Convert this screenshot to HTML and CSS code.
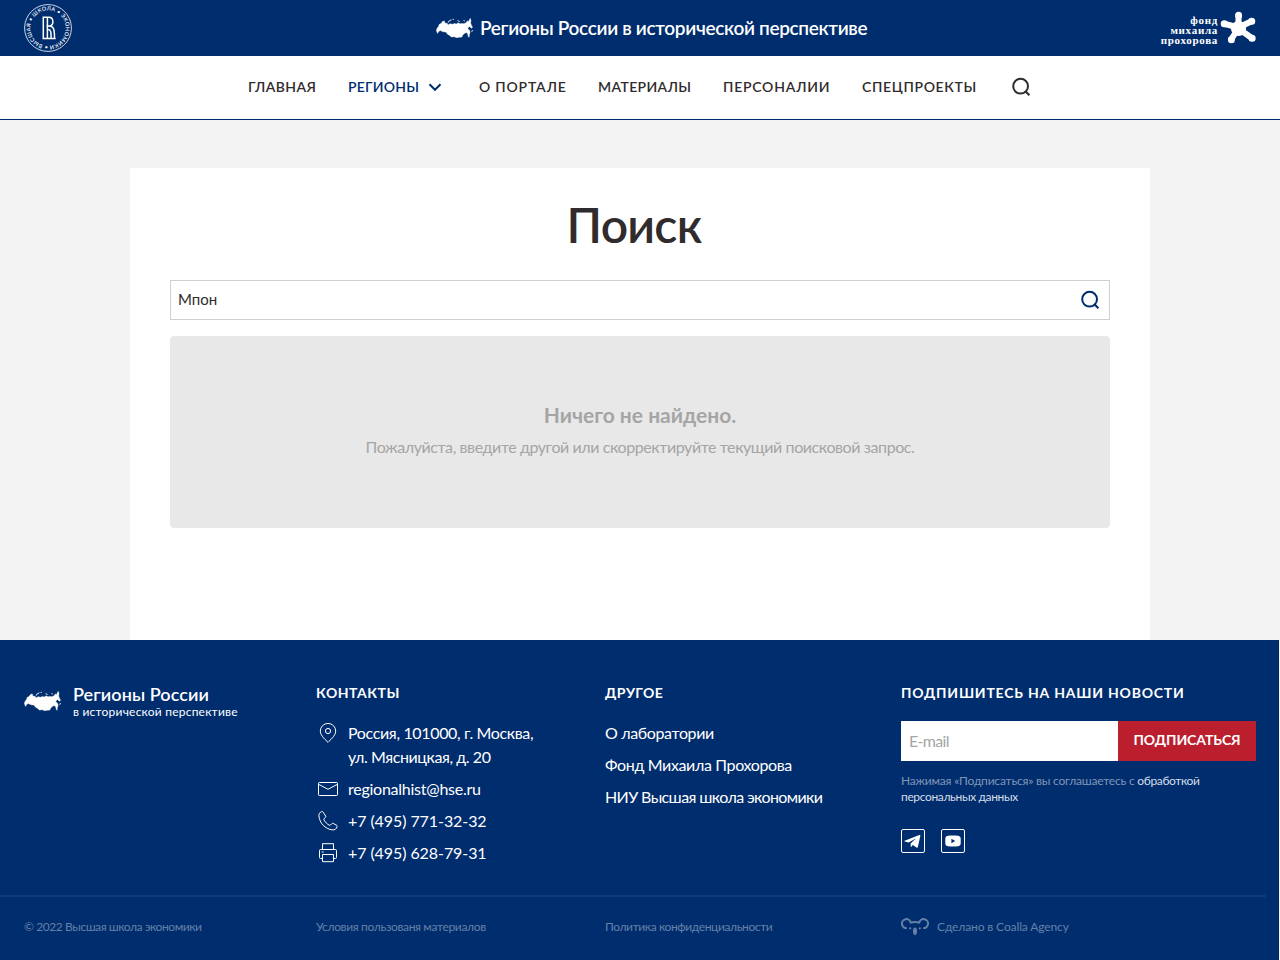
FILE: index.html
```
<!DOCTYPE html>
<html lang="ru">
<head>
<meta charset="utf-8">
<title>Поиск — Регионы России в исторической перспективе</title>
<link rel="stylesheet" href="styles.css">
</head>
<body>
<svg class="defs" width="0" height="0" aria-hidden="true">
  <symbol id="russia" viewBox="0 0 37 20">
    <path fill="#fff" stroke="#fff" stroke-width=".4" stroke-linejoin="round" d="M.3 12.200 1.400 9.800 2.600 8.600 3 6.600 5 5.400 6.800 3.200 8.400 3 8.800 5 11.400 5.600 12 7 14 5.700 16.600 6.200 18.600 5.500 20.400 6 22 4.800 24 5.800 26 5.400 28 5.800 30.400 4.600 31.200 2.900 32.600 3.400 34.200.3 35 2.400 34.600 5 35.800 8 36.600 9.300 35.300 10.300 33.600 8.400 31.600 10.200 33.800 12.800 34.100 15 33.300 16.400 33.200 19.300 32.200 18.600 31.800 16 30.200 14.600 28.400 15.400 26.500 17.200 26 19 23 19.300 20.600 19.700 18.400 18.800 15.400 18.900 13.400 17.200 11.800 16.400 9.800 14 7 13.800 4.400 12.600 2.600 13.400 1.600 15.400 1 14.200Z"/>
    <path fill="none" stroke="#fff" stroke-width=".9" d="M12.200 4.600 13 3l2.400-1.200M16.600 1.400h1.200M21.600 2.600l2 .9M27.500 2.500l1.400.6M35.700 13.800l.8-1.800"/>
  </symbol>
  <symbol id="magnifier" viewBox="0 0 24 24">
    <circle cx="11.600" cy="11.200" r="7.400" fill="none" stroke="currentColor" stroke-width="2"/>
    <path d="m16.200 16 4.200 4.200" fill="none" stroke="currentColor" stroke-width="2.100"/>
  </symbol>
</svg>

<header class="topbar">
  <a class="hse">
    <svg width="48" height="48" viewBox="0 0 48 48">
      <circle cx="24" cy="24" r="23.400" fill="none" stroke="#fff" stroke-width=".8"/>
      <path id="ring" fill="none" d="M24 41.700A17.700 17.700 0 0 1 24 6.300 17.700 17.700 0 0 1 24 41.700"/>
      <text class="ring-text"><textPath href="#ring" textLength="109" startOffset="0">• ВЫСШАЯ • ШКОЛА • ЭКОНОМИКИ</textPath></text>
      <path fill="none" stroke="#fff" stroke-width="1.500" d="M19.300 12.800v22M18.500 13.300h6.300c5.400 0 5.400 8.800.4 8.800h-2.800M23.400 13.300v21.500M18.500 34.500h13.200M25 22.100c5.200 0 5.500 4.500 5.500 12.400M24.300 25.400c2.900 0 2.800 3.200 2.800 9"/>
    </svg>
  </a>
  <a class="brand">
    <svg width="37" height="20"><use href="#russia"/></svg>
    <span>Регионы России в исторической перспективе</span>
  </a>
  <a class="fund">
    <span class="fund-name"><span>фонд</span><span>михаила</span><span>прохорова</span></span>
    <svg width="36" height="34" viewBox="0 0 36 34">
      <g fill="none" stroke="#fff" stroke-linecap="round">
        <path stroke-width="6" d="M18.500 16.500V5M18.500 16.500 5 13M18.500 16.500 31 10.500M18.500 17.500 31 26.500M18.500 17 11.500 28"/>
        <path stroke-width="7" d="M18.600 4.200v.4M4.200 12.800h.2M31.600 10.300h.2M32 27.200h.2M11.400 28.600v.2"/>
      </g>
      <circle cx="18.500" cy="17.500" r="7.600" fill="#fff"/>
    </svg>
  </a>
</header>

<nav class="nav">
  <a class="n1">ГЛАВНАЯ</a>
  <a class="n2">РЕГИОНЫ<svg width="24" height="24" viewBox="0 0 24 24"><path d="m6.500 9.300 5.500 5.500 5.500-5.500" fill="none" stroke="currentColor" stroke-width="2"/></svg></a>
  <a class="n3">О ПОРТАЛЕ</a>
  <a class="n4">МАТЕРИАЛЫ</a>
  <a class="n5">ПЕРСОНАЛИИ</a>
  <a class="n6">СПЕЦПРОЕКТЫ</a>
  <a class="n7"><svg width="24" height="24"><use href="#magnifier"/></svg></a>
</nav>

<main class="page">
  <section class="card">
    <h1>Поиск</h1>
    <div class="search"><span>Мпон</span><svg width="24" height="24"><use href="#magnifier"/></svg></div>
    <div class="empty">
      <strong>Ничего не найдено.</strong>
      <p>Пожалуйста, введите другой или скорректируйте текущий поисковой запрос.</p>
    </div>
  </section>
</main>

<footer class="footer">
  <div class="cols">
    <div class="logo">
      <svg width="37" height="20"><use href="#russia"/></svg>
      <div><b>Регионы России</b><small>в исторической перспективе</small></div>
    </div>
    <div class="contacts">
      <h2 class="h-contacts">КОНТАКТЫ</h2>
      <div class="row"><svg width="24" height="24" viewBox="0 0 24 24"><path d="M12 21.300c-1.600-1.700-7.700-6.400-7.700-11.200a7.700 7.700 0 0 1 15.400 0c0 4.800-6.100 9.500-7.700 11.200Z"/><circle cx="12" cy="10" r="2.600"/></svg><span><span class="l1">Россия, 101000, г. Москва,</span><br><span class="l2">ул. Мясницкая, д. 20</span></span></div>
      <div class="row"><svg width="24" height="24" viewBox="0 0 24 24"><rect x="2.500" y="5.500" width="19" height="13" rx=".8"/><path d="m2.600 7.300 9.400 5 9.400-5"/></svg><span class="mail">regionalhist@hse.ru</span></div>
      <div class="row"><svg width="24" height="24" viewBox="0 0 24 24"><path d="M5.700 2.600C4 3.200 2.700 4.700 2.900 6.900c.7 7.200 6.200 13 13.300 14 2.500.3 4.600-1.200 4.900-3.500.1-.6-.1-.9-.6-1.200l-3.300-1.800c-.5-.3-.9-.2-1.300.2l-1.500 1.500c-.4.3-.7.3-1.100.1-2.200-1.100-4.200-3.100-5.400-5.500-.2-.4-.1-.8.2-1.100l1.400-1.300c.4-.4.4-.8.200-1.200L7.200 3.200c-.4-.7-.8-.8-1.500-.6Z"/></svg><span class="tel">+7 (495) 771-32-32</span></div>
      <div class="row"><svg width="24" height="24" viewBox="0 0 24 24"><path d="M6.500 8.500v-5.800h11v5.800M6.500 17.500h-2a1 1 0 0 1-1-1v-7a1 1 0 0 1 1-1h15a1 1 0 0 1 1 1v7a1 1 0 0 1-1 1h-2M6.500 13.500h11v7.200h-11zM5.700 11h2"/></svg><span class="tel">+7 (495) 628-79-31</span></div>
    </div>
    <div class="other">
      <h2 class="h-other">ДРУГОЕ</h2>
      <a class="o1">О лаборатории</a>
      <a class="o2">Фонд Михаила Прохорова</a>
      <a class="o3">НИУ Высшая школа экономики</a>
    </div>
    <div class="subscribe">
      <h2 class="h-news">ПОДПИШИТЕСЬ НА НАШИ НОВОСТИ</h2>
      <div class="form"><span class="field">E-mail</span><span class="button">ПОДПИСАТЬСЯ</span></div>
      <p>Нажимая «Подписаться» вы соглашаетесь с <a>обработкой<br>персональных данных</a></p>
      <div class="social">
        <svg width="24" height="24" viewBox="0 0 24 24"><rect x=".5" y=".5" width="23" height="23" rx="1.500" fill="none" stroke="#fff"/><path fill="#fff" d="M3.700 11.800 18.300 6c.7-.3 1.200.1 1 .9l-2.400 11c-.2.8-.8 1-1.400.6l-5.900-4.100 5.500-5.200-7.400 4.400-4-1.200c-.6-.2-.6-.4 0-.6ZM9.700 14l2.400 1.600-1.700 2.200-.7.100Z"/></svg>
        <svg width="24" height="24" viewBox="0 0 24 24"><rect x=".5" y=".5" width="23" height="23" rx="1.500" fill="none" stroke="#fff"/><path fill="#fff" fill-rule="evenodd" d="M7 6.700c3-.3 7-.3 10 0q2.600.2 2.700 2.600v5.400q-.1 2.400-2.700 2.600c-3 .3-7 .3-10 0q-2.600-.2-2.700-2.600V9.300q.1-2.400 2.700-2.600ZM10.400 9.800v4.400l3.800-2.200Z"/></svg>
      </div>
    </div>
  </div>
  <div class="legal">
    <span class="g1">© 2022 Высшая школа экономики</span>
    <span class="g2">Условия пользованя материалов</span>
    <span class="g3">Политика конфиденциальности</span>
    <span class="g4"><svg width="28" height="18" viewBox="0 0 28 18"><g fill="none" stroke="currentColor" stroke-width="2"><path d="M5.800 10.100A4.500 4.500 0 1 1 9.800 4.600Q14 3.400 18.200 4.600A4.500 4.500 0 1 1 22.200 10.100"/></g><g fill="currentColor"><circle cx="9.200" cy="10.300" r="1.100"/><circle cx="18.800" cy="10.300" r="1.100"/><ellipse cx="14" cy="13.200" rx="2" ry="3.700"/></g></svg><span>Сделано в Coalla Agency</span></span>
  </div>
</footer>
</body>
</html>
```
FILE: styles.css
```
* { box-sizing: border-box; }
body { margin: 0; width: 1280px; height: 960px; overflow: hidden; background: #f3f3f3; color: #302b2c; font-family: Lato, "Noto Sans", sans-serif; font-size: 16px; line-height: 24px; white-space: nowrap; }
h1, h2, p { margin: 0; }
svg { display: block; flex: none; }
.defs { position: absolute; }

.topbar { height: 56px; padding: 0 24px; background: #002d6e; color: #fff; display: grid; grid-template-columns: 412px 1fr auto; align-items: center; }
.ring-text { fill: #fff; font-size: 5.400px; font-weight: 600; }
.brand { display: flex; align-items: center; gap: 7px; font-size: 19px; font-weight: 600; letter-spacing: -.33px; }
.fund { display: flex; align-items: center; gap: 2px; }
.fund-name { display: flex; flex-direction: column; align-items: flex-end; padding-top: 3px; font: 700 11px/10px "Liberation Serif", "Noto Serif", serif; letter-spacing: .7px; }

.nav { height: 64px; padding: 0 0 1px 248px; background: #fff; border-bottom: 1px solid #002d6e; display: flex; align-items: center; font-size: 14px; font-weight: 600; }
.nav a { display: flex; align-items: center; }
.n1 { width: 100px; letter-spacing: .43px; }
.n2 { width: 131px; gap: 4px; color: #002d6e; letter-spacing: .22px; }
.n3 { width: 119px; letter-spacing: .8px; }
.n4 { width: 125px; letter-spacing: .36px; }
.n5 { width: 139px; letter-spacing: .76px; }
.n6 { width: 147px; letter-spacing: .66px; }

.page { height: 520px; padding: 48px 130px 0; }
.card { height: 472px; padding: 30px 40px 0; background: #fff; }
h1 { height: 82px; padding-right: 12px; text-align: center; font-size: 48px; line-height: 54px; font-weight: 600; letter-spacing: -.75px; }
.search { height: 40px; padding: 0 7px; border: 1px solid #d0d0d0; display: flex; align-items: center; justify-content: space-between; font-size: 15px; }
.search svg { color: #002d6e; }
.search span { margin-top: -2px; }
.empty { height: 192px; margin-top: 16px; padding-top: 67px; border-radius: 4px; background: #e8e8e8; color: #a5a5a5; text-align: center; }
.empty strong { display: block; font-size: 21px; font-weight: 700; }
.empty p { margin-top: 8px; letter-spacing: -.41px; }

.footer { width: 1279px; height: 320px; background: #002d6e; color: #fff; }
.cols { height: 255px; padding: 41px 23px 0 24px; display: grid; grid-template-columns: 292px 289px 296px 355px; }
.logo { display: flex; align-items: flex-start; gap: 12px; }
.logo svg { margin-top: 10px; }
.logo b { display: block; font-size: 18px; line-height: 24px; margin-top: 1px; font-weight: 600; letter-spacing: .07px; }
.logo small { display: block; font-size: 12px; line-height: 14px; margin-top: -1px; letter-spacing: .22px; }
h2 { font-size: 14px; line-height: 24px; margin-bottom: 16px; font-weight: 700; }
.h-contacts { letter-spacing: .55px; }
.h-other { letter-spacing: .45px; }
.h-news { letter-spacing: .79px; }
.row { display: flex; gap: 8px; margin-bottom: 8px; }
.row > svg { fill: none; stroke: #fff; stroke-width: 1; }
.l1 { letter-spacing: -.35px; }
.l2 { letter-spacing: -.42px; }
.mail { letter-spacing: -.25px; }
.tel { letter-spacing: -.08px; }
.other a { display: block; margin-bottom: 8px; }
.o1 { letter-spacing: -.36px; }
.o2 { letter-spacing: -.36px; }
.o3 { letter-spacing: -.61px; }
.form { height: 40px; display: flex; line-height: 40px; }
.field { width: 217px; padding-left: 8px; background: #fff; color: #a5a5a5; letter-spacing: -.7px; }
.button { width: 138px; background: #bb1e2d; text-align: center; font-size: 14px; line-height: 38px; font-weight: 700; letter-spacing: -.05px; }
.subscribe p { margin-top: 12px; font-size: 12px; line-height: 16px; letter-spacing: -.2px; color: #8096b6; }
.subscribe p a { color: #d5dde8; letter-spacing: -.36px; }
.social { display: flex; gap: 16px; margin-top: 24px; }
.legal { width: 1266px; height: 65px; padding: 18px 0 0 24px; border-top: 2px solid #10397a; display: grid; grid-template-columns: 292px 289px 296px 1fr; font-size: 12px; color: #6681a8; }
.g1 { letter-spacing: -.43px; }
.g2 { letter-spacing: -.34px; }
.g3 { letter-spacing: -.39px; }
.g4 { display: flex; align-items: flex-start; gap: 8px; letter-spacing: -.12px; }
.g4 svg { margin-top: 3px; }
```
